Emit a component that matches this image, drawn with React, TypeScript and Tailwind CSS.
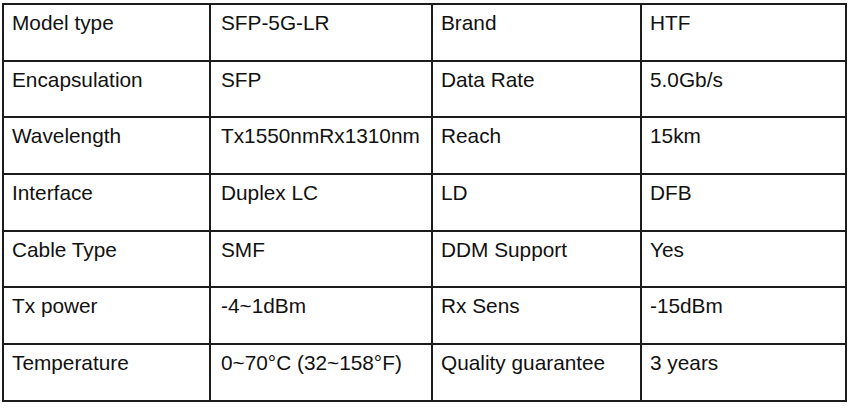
const rows: [string, string, string, string][] = [
  ["Model type", "SFP-5G-LR", "Brand", "HTF"],
  ["Encapsulation", "SFP", "Data Rate", "5.0Gb/s"],
  ["Wavelength", "Tx1550nmRx1310nm", "Reach", "15km"],
  ["Interface", "Duplex LC", "LD", "DFB"],
  ["Cable Type", "SMF", "DDM Support", "Yes"],
  ["Tx power", "-4~1dBm", "Rx Sens", "-15dBm"],
  ["Temperature", "0~70°C (32~158°F)", "Quality guarantee", "3 years"],
]

export default function App() {
  return (
    <div className="h-[409px] w-[850px] bg-white pt-[3px] pl-[2px] font-['Liberation_Sans',Arial,sans-serif] text-[20.8px] leading-[24px] text-[#111]">
      <div className="grid w-[845px] auto-rows-[56.7px] grid-cols-[207px_222px_209px_205px] border-t-2 border-l-2 border-[#1c1c1c]">
        {rows.map((row, i) =>
          row.map((cell, j) => (
            <div
              key={`${i}-${j}`}
              className={
                "border-r-2 border-b-2 border-[#1c1c1c] pt-[6px] whitespace-nowrap " +
                (j === 1 ? "pl-[10px]" : "pl-[8px]")
              }
            >
              {cell}
            </div>
          )),
        )}
      </div>
    </div>
  )
}
